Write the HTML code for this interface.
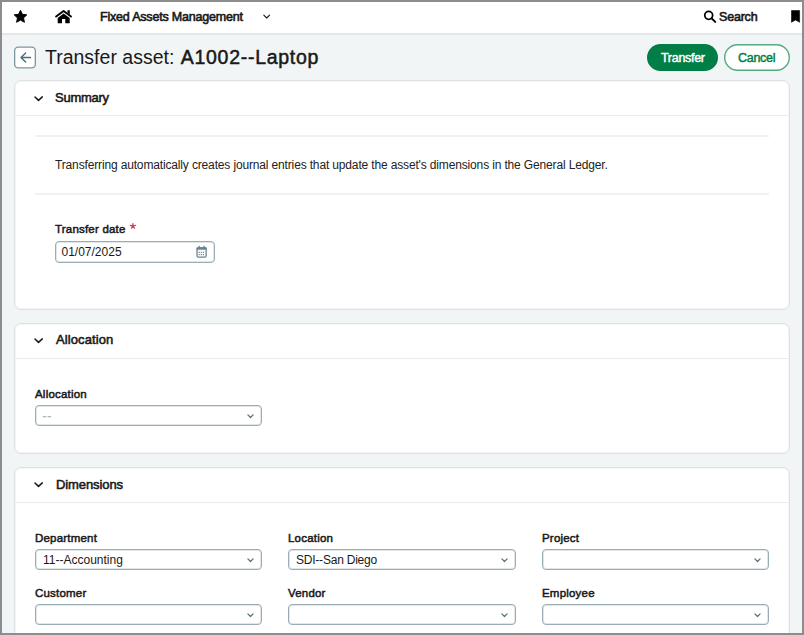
<!DOCTYPE html>
<html><head><meta charset="utf-8">
<style>
*{box-sizing:border-box;margin:0;padding:0}
html,body{width:804px;height:635px;overflow:hidden;background:#f2f5f6;font-family:"Liberation Sans",sans-serif;color:#191919}
.abs{position:absolute}
#frame{position:absolute;left:0;top:0;width:804px;height:635px;border:2px solid #8d8d8d;z-index:50;pointer-events:none}
#hdr{position:absolute;left:0;top:0;width:804px;height:35px;background:#fff;border-bottom:2px solid #e2e7ea}
.t{position:absolute;white-space:nowrap}
.hb{font-size:12.5px;letter-spacing:-0.2px;line-height:16px;-webkit-text-stroke:0.6px #191919}
.card{position:absolute;left:14px;width:776px;background:#fff;border:1px solid #dce2e5;border-radius:7px;box-shadow:inset 0 0 0 1px rgba(220,226,229,0.35)}
.chd{position:absolute;left:0;top:0;width:100%;height:35px;border-bottom:1px solid #e6ebed}
.ctitle{position:absolute;left:41px;font-size:13px;letter-spacing:-0.1px;line-height:16px;-webkit-text-stroke:0.55px #191919}
.lbl{position:absolute;font-size:11.5px;letter-spacing:0.2px;line-height:14px;-webkit-text-stroke:0.5px #191919}
.inp{position:absolute;height:21px;border:1px solid #9aadb6;border-radius:4px;background:#fff;box-shadow:inset 0 0 0 1px rgba(154,173,182,0.3)}
.inp span{position:absolute;left:7px;top:3px;font-size:12px;line-height:14px;color:#191919}
.div{position:absolute;height:2px;background:#eff2f4}
svg{position:absolute;overflow:visible}
</style></head><body>
<div id="hdr">
  <!-- star -->
  <svg style="left:13px;top:9px" width="15" height="15" viewBox="0 0 15 15"><path d="M7.50 1.30 L9.38 5.31 L13.78 5.86 L10.54 8.89 L11.38 13.24 L7.50 11.10 L3.62 13.24 L4.46 8.89 L1.22 5.86 L5.62 5.31 Z" fill="#000" stroke="#000" stroke-width="1" stroke-linejoin="round"/></svg>
  <!-- home -->
  <svg style="left:55px;top:10px" width="17" height="14" viewBox="0 0 17 14"><path d="M1.1 6.6 L8.6 0.9 L16 6.6" fill="none" stroke="#000" stroke-width="1.9" stroke-linecap="round" stroke-linejoin="round"/><path d="M12.5 0.3 L14.8 0.3 L14.8 4.6 L12.5 2.9 Z" fill="#000"/><path d="M2.7 8 L8.6 3.6 L14.7 8 L14.7 12.9 Q14.7 13.3 14.3 13.3 L10.3 13.3 L10.3 8.9 L7.0 8.9 L7.0 13.3 L3.1 13.3 Q2.7 13.3 2.7 12.9 Z" fill="#000"/></svg>
  <div class="t hb" style="left:100px;top:9px">Fixed Assets Management</div>
  <svg style="left:263px;top:14px" width="8" height="6" viewBox="0 0 8 6"><path d="M0.8 1.2 L3.7 4 L6.6 1.2" fill="none" stroke="#191919" stroke-width="1.1" stroke-linecap="round" stroke-linejoin="round"/></svg>
  <!-- search -->
  <svg style="left:703px;top:10px" width="14" height="14" viewBox="0 0 14 14"><circle cx="5.7" cy="5.3" r="3.95" fill="none" stroke="#000" stroke-width="1.75"/><path d="M8.7 8.4 L12.2 11.9" stroke="#000" stroke-width="2" stroke-linecap="round"/></svg>
  <div class="t hb" style="left:719px;top:9px">Search</div>
  <!-- bookmark -->
  <svg style="left:791px;top:10px" width="10" height="13" viewBox="0 0 10 13"><path d="M0.5 0.6 L8.6 0.6 L8.6 12.3 L4.55 9.9 L0.5 12.3 Z" fill="#000" stroke="#000" stroke-width="0.6" stroke-linejoin="round"/></svg>
</div>

<!-- title row -->
<svg style="left:14px;top:46px" width="22" height="23" viewBox="0 0 22 23"><rect x="0.65" y="1.05" width="20.7" height="20.9" rx="3.6" fill="#fff" stroke="#7d96a2" stroke-width="1.3"/></svg>
<svg style="left:20px;top:52px" width="12" height="11" viewBox="0 0 12 11"><path d="M10.5 5.5 L1.2 5.5 M5.6 1 L1 5.5 L5.6 10" fill="none" stroke="#4e6c79" stroke-width="1.4" stroke-linecap="round" stroke-linejoin="round"/></svg>
<div class="t" style="left:45px;top:46px;font-size:19.5px;line-height:22px">Transfer asset: <span style="letter-spacing:0.72px;-webkit-text-stroke:0.5px #191919;margin-left:1px">A1002--Laptop</span></div>

<div class="abs" style="left:647px;top:44px;width:71px;height:27px;background:#007e45;border-radius:14px"></div>
<div class="t" style="left:661px;top:51px;font-size:12.5px;letter-spacing:-0.3px;line-height:15px;color:#fff;-webkit-text-stroke:0.45px #fff">Transfer</div>
<svg style="left:724px;top:44px" width="66" height="27" viewBox="0 0 66 27"><rect x="0.7" y="0.7" width="64.6" height="25.6" rx="12.8" fill="#fff" stroke="#55aa7f" stroke-width="1.4"/></svg>
<div class="t" style="left:738px;top:51px;font-size:12.5px;letter-spacing:-0.3px;line-height:15px;color:#007e45;-webkit-text-stroke:0.45px #007e45">Cancel</div>

<!-- summary card -->
<div class="card" style="top:80px;height:230px">
  <div class="chd"></div>
</div>
<svg style="left:34px;top:96px" width="10" height="6" viewBox="0 0 10 6"><path d="M1 1 L4.5 4.4 L8.3 0.9" fill="none" stroke="#191919" stroke-width="1.5" stroke-linecap="round" stroke-linejoin="round"/></svg>
<div class="t ctitle" style="left:55px;top:90px;letter-spacing:-0.25px">Summary</div>
<div class="div" style="left:35px;top:135px;width:734px"></div>
<div class="t" style="left:55px;top:158px;font-size:12px;letter-spacing:-0.15px;line-height:14px;color:#222">Transferring automatically creates journal entries that update the asset's dimensions in the General Ledger.</div>
<div class="div" style="left:35px;top:193px;width:734px"></div>
<div class="t lbl" style="left:55px;top:222px">Transfer date</div>
<svg style="left:130px;top:223px" width="6" height="6" viewBox="0 0 6 6"><path d="M2.90 3.10 L2.90 0.50 M2.90 3.10 L5.40 2.30 M2.90 3.10 L4.45 5.25 M2.90 3.10 L1.35 5.25 M2.90 3.10 L0.40 2.30" stroke="#d03a50" stroke-width="1.25" stroke-linecap="round"/></svg>
<div class="inp" style="left:55px;top:241px;width:160px;height:22px"><span style="left:5.5px">01/07/2025</span></div>
<svg style="left:196px;top:245px" width="11" height="13" viewBox="0 0 11 13"><rect x="1.05" y="2.85" width="9.1" height="9.3" rx="1.3" fill="none" stroke="#668592" stroke-width="1.3"/><rect x="0.4" y="2.2" width="10.4" height="2.5" rx="1" fill="#668592"/><rect x="2.5" y="0.8" width="1.3" height="2.6" fill="#668592"/><rect x="7.3" y="0.8" width="1.3" height="2.6" fill="#668592"/><g fill="#668592"><rect x="2.6" y="6.7" width="1.2" height="1.2"/><rect x="4.7" y="6.7" width="1.2" height="1.2"/><rect x="6.8" y="6.7" width="1.2" height="1.2"/><rect x="2.6" y="9" width="1.2" height="1.2"/><rect x="4.7" y="9" width="1.2" height="1.2"/><rect x="6.8" y="9" width="1.2" height="1.2"/></g></svg>

<!-- allocation card -->
<div class="card" style="top:323px;height:131px">
  <div class="chd" style="height:35px"></div>
</div>
<svg style="left:34px;top:338px" width="10" height="6" viewBox="0 0 10 6"><path d="M1 1 L4.5 4.4 L8.3 0.9" fill="none" stroke="#191919" stroke-width="1.5" stroke-linecap="round" stroke-linejoin="round"/></svg>
<div class="t ctitle" style="left:56px;top:332px;letter-spacing:0.1px">Allocation</div>
<div class="t lbl" style="left:35px;top:387px">Allocation</div>
<div class="inp" style="left:35px;top:405px;width:227px"><span style="color:#aab6bc;left:6.5px;letter-spacing:0.8px;-webkit-text-stroke:0.3px #aab6bc">--</span></div>
<svg class="chev" style="left:247px;top:413px" width="7" height="5" viewBox="0 -1 7 5"><path d="M0.9 0.9 L3.5 3.5 L6.1 0.9" fill="none" stroke="#53707c" stroke-width="1.25" stroke-linecap="round" stroke-linejoin="round"/></svg>

<!-- dimensions card -->
<div class="card" style="top:467px;height:200px">
  <div class="chd"></div>
</div>
<svg style="left:34px;top:482px" width="10" height="6" viewBox="0 0 10 6"><path d="M1 1 L4.5 4.4 L8.3 0.9" fill="none" stroke="#191919" stroke-width="1.5" stroke-linecap="round" stroke-linejoin="round"/></svg>
<div class="t ctitle" style="left:56px;top:477px">Dimensions</div>

<div class="t lbl" style="left:35px;top:531px">Department</div>
<div class="inp" style="left:35px;top:549px;width:227px"><span>11--Accounting</span></div>
<svg style="left:247px;top:557px" width="7" height="5" viewBox="0 -1 7 5"><path d="M0.9 0.9 L3.5 3.5 L6.1 0.9" fill="none" stroke="#53707c" stroke-width="1.25" stroke-linecap="round" stroke-linejoin="round"/></svg>
<div class="t lbl" style="left:288px;top:531px">Location</div>
<div class="inp" style="left:288px;top:549px;width:228px"><span style="letter-spacing:-0.22px">SDI--San Diego</span></div>
<svg style="left:501px;top:557px" width="7" height="5" viewBox="0 -1 7 5"><path d="M0.9 0.9 L3.5 3.5 L6.1 0.9" fill="none" stroke="#53707c" stroke-width="1.25" stroke-linecap="round" stroke-linejoin="round"/></svg>
<div class="t lbl" style="left:542px;top:531px">Project</div>
<div class="inp" style="left:542px;top:549px;width:227px"></div>
<svg style="left:754px;top:557px" width="7" height="5" viewBox="0 -1 7 5"><path d="M0.9 0.9 L3.5 3.5 L6.1 0.9" fill="none" stroke="#53707c" stroke-width="1.25" stroke-linecap="round" stroke-linejoin="round"/></svg>

<div class="t lbl" style="left:35px;top:586px">Customer</div>
<div class="inp" style="left:35px;top:604px;width:227px"></div>
<svg style="left:247px;top:612px" width="7" height="5" viewBox="0 -1 7 5"><path d="M0.9 0.9 L3.5 3.5 L6.1 0.9" fill="none" stroke="#53707c" stroke-width="1.25" stroke-linecap="round" stroke-linejoin="round"/></svg>
<div class="t lbl" style="left:288px;top:586px">Vendor</div>
<div class="inp" style="left:288px;top:604px;width:228px"></div>
<svg style="left:501px;top:612px" width="7" height="5" viewBox="0 -1 7 5"><path d="M0.9 0.9 L3.5 3.5 L6.1 0.9" fill="none" stroke="#53707c" stroke-width="1.25" stroke-linecap="round" stroke-linejoin="round"/></svg>
<div class="t lbl" style="left:542px;top:586px">Employee</div>
<div class="inp" style="left:542px;top:604px;width:227px"></div>
<svg style="left:754px;top:612px" width="7" height="5" viewBox="0 -1 7 5"><path d="M0.9 0.9 L3.5 3.5 L6.1 0.9" fill="none" stroke="#53707c" stroke-width="1.25" stroke-linecap="round" stroke-linejoin="round"/></svg>

<div id="frame"></div>
</body></html>
